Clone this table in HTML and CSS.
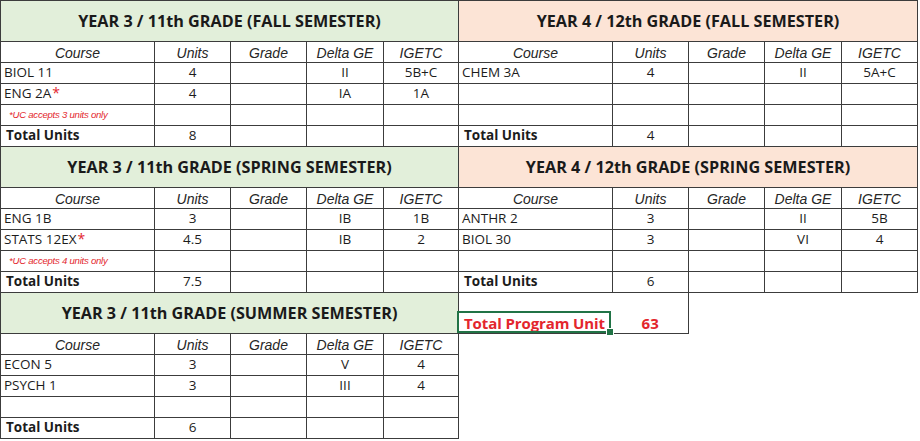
FILE: index.html
```html
<!DOCTYPE html>
<html lang="en">
<head>
<meta charset="utf-8">
<title>Program Plan</title>
<link rel="stylesheet" href="styles.css">
</head>
<body>
<div class="sheet">
  <div class="col col-left">
    <div class="block">
      <div class="c title green">YEAR 3 / 11th GRADE (FALL SEMESTER)</div>
      <div class="c hd">Course</div><div class="c hd">Units</div><div class="c hd">Grade</div><div class="c hd">Delta GE</div><div class="c hd">IGETC</div>
      <div class="c name">BIOL 11</div><div class="c">4</div><div class="c"></div><div class="c">II</div><div class="c">5B+C</div>
      <div class="c name">ENG 2A<span class="ast">*</span></div><div class="c">4</div><div class="c"></div><div class="c">IA</div><div class="c">1A</div>
      <div class="c name note">*UC accepts 3 units only</div><div class="c"></div><div class="c"></div><div class="c"></div><div class="c"></div>
      <div class="c name total">Total Units</div><div class="c">8</div><div class="c"></div><div class="c"></div><div class="c"></div>
    </div>
    <div class="block">
      <div class="c title green">YEAR 3 / 11th GRADE (SPRING SEMESTER)</div>
      <div class="c hd">Course</div><div class="c hd">Units</div><div class="c hd">Grade</div><div class="c hd">Delta GE</div><div class="c hd">IGETC</div>
      <div class="c name">ENG 1B</div><div class="c">3</div><div class="c"></div><div class="c">IB</div><div class="c">1B</div>
      <div class="c name">STATS 12EX<span class="ast">*</span></div><div class="c">4.5</div><div class="c"></div><div class="c">IB</div><div class="c">2</div>
      <div class="c name note">*UC accepts 4 units only</div><div class="c"></div><div class="c"></div><div class="c"></div><div class="c"></div>
      <div class="c name total">Total Units</div><div class="c">7.5</div><div class="c"></div><div class="c"></div><div class="c"></div>
    </div>
    <div class="block">
      <div class="c title green">YEAR 3 / 11th GRADE (SUMMER SEMESTER)</div>
      <div class="c hd">Course</div><div class="c hd">Units</div><div class="c hd">Grade</div><div class="c hd">Delta GE</div><div class="c hd">IGETC</div>
      <div class="c name">ECON 5</div><div class="c">3</div><div class="c"></div><div class="c">V</div><div class="c">4</div>
      <div class="c name">PSYCH 1</div><div class="c">3</div><div class="c"></div><div class="c">III</div><div class="c">4</div>
      <div class="c name"></div><div class="c"></div><div class="c"></div><div class="c"></div><div class="c"></div>
      <div class="c name total">Total Units</div><div class="c">6</div><div class="c"></div><div class="c"></div><div class="c"></div>
    </div>
  </div>
  <div class="col col-right">
    <div class="block">
      <div class="c title orange">YEAR 4 / 12th GRADE (FALL SEMESTER)</div>
      <div class="c hd">Course</div><div class="c hd">Units</div><div class="c hd">Grade</div><div class="c hd">Delta GE</div><div class="c hd">IGETC</div>
      <div class="c name">CHEM 3A</div><div class="c">4</div><div class="c"></div><div class="c">II</div><div class="c">5A+C</div>
      <div class="c name"></div><div class="c"></div><div class="c"></div><div class="c"></div><div class="c"></div>
      <div class="c name"></div><div class="c"></div><div class="c"></div><div class="c"></div><div class="c"></div>
      <div class="c name total">Total Units</div><div class="c">4</div><div class="c"></div><div class="c"></div><div class="c"></div>
    </div>
    <div class="block">
      <div class="c title orange">YEAR 4 / 12th GRADE (SPRING SEMESTER)</div>
      <div class="c hd">Course</div><div class="c hd">Units</div><div class="c hd">Grade</div><div class="c hd">Delta GE</div><div class="c hd">IGETC</div>
      <div class="c name">ANTHR 2</div><div class="c">3</div><div class="c"></div><div class="c">II</div><div class="c">5B</div>
      <div class="c name">BIOL 30</div><div class="c">3</div><div class="c"></div><div class="c">VI</div><div class="c">4</div>
      <div class="c name"></div><div class="c"></div><div class="c"></div><div class="c"></div><div class="c"></div>
      <div class="c name total">Total Units</div><div class="c">6</div><div class="c"></div><div class="c"></div><div class="c"></div>
    </div>
    <div class="program">
      <div class="program-spacer"></div>
      <div class="program-row">
        <div class="program-label">Total Program Unit<span class="sel"><span class="handle"></span></span></div>
        <div class="program-value">63</div>
      </div>
    </div>
  </div>
</div>
</body>
</html>
```

FILE: styles.css
```css
html, body {
  margin: 0;
  padding: 0;
  background: #ffffff;
}

body {
  font-family: "Open Sans", "Liberation Sans", sans-serif;
  color: #1c1c1c;
}

.sheet {
  display: grid;
  grid-template-columns: 459px 459px;
  width: 918px;
  border-top: 1px solid #3c3c3c;
  align-items: start;
}

.col-left {
  border-left: 1px solid #3c3c3c;
}

.block {
  display: grid;
}

.col-left .block {
  grid-template-columns: 154px 76px 76px 77px 75px;
}

.col-right .block {
  grid-template-columns: 154px 76px 76px 77px 76px;
}

.c {
  box-sizing: border-box;
  height: 21px;
  border-right: 1px solid #3c3c3c;
  border-bottom: 1px solid #3c3c3c;
  display: flex;
  align-items: center;
  justify-content: center;
  font-size: 13.5px;
  line-height: 1;
  white-space: nowrap;
  overflow: hidden;
}

.title {
  grid-column: 1 / -1;
  height: 41px;
  font-weight: 700;
  font-size: 16.2px;
  color: #1a1a1a;
  padding-top: 1px;
}

.green {
  background: #e2efda;
}

.orange {
  background: #fce4d6;
}

.hd {
  font-family: "Liberation Sans", Arial, sans-serif;
  font-style: italic;
  font-size: 14px;
  color: #262626;
  padding-top: 2px;
}

.name {
  justify-content: flex-start;
  padding-left: 3px;
}

.total {
  font-weight: 700;
  padding-left: 5px;
}

.ast {
  color: #e3262d;
  font-size: 14px;
  align-self: flex-start;
  margin-top: 2px;
  margin-left: 1px;
}

.note {
  font-family: "Liberation Sans", Arial, sans-serif;
  font-style: italic;
  font-size: 9.6px;
  color: #e3262d;
  padding-left: 8px;
  letter-spacing: -0.25px;
}

.program {
  box-sizing: border-box;
  width: 230px;
  height: 41px;
  border-right: 1px solid #3c3c3c;
  border-bottom: 1px solid #3c3c3c;
  display: flex;
  flex-direction: column;
}

.program-spacer {
  height: 19px;
}

.program-row {
  display: flex;
  height: 21px;
}

.program-label {
  position: relative;
  width: 154px;
  display: flex;
  align-items: center;
  padding-left: 5px;
  box-sizing: border-box;
  font-size: 15px;
  font-weight: 700;
  color: #e3262d;
  white-space: nowrap;
  letter-spacing: -0.1px;
}

.program-value {
  width: 76px;
  display: flex;
  align-items: center;
  justify-content: center;
  font-size: 15px;
  font-weight: 700;
  color: #e3262d;
}

.sel {
  position: absolute;
  left: -2px;
  top: -1px;
  width: 154px;
  height: 22px;
  box-sizing: border-box;
  border: 2px solid #217346;
}

.handle {
  position: absolute;
  right: -5px;
  bottom: -5px;
  width: 6px;
  height: 6px;
  background: #217346;
  border: 1px solid #ffffff;
}
```
